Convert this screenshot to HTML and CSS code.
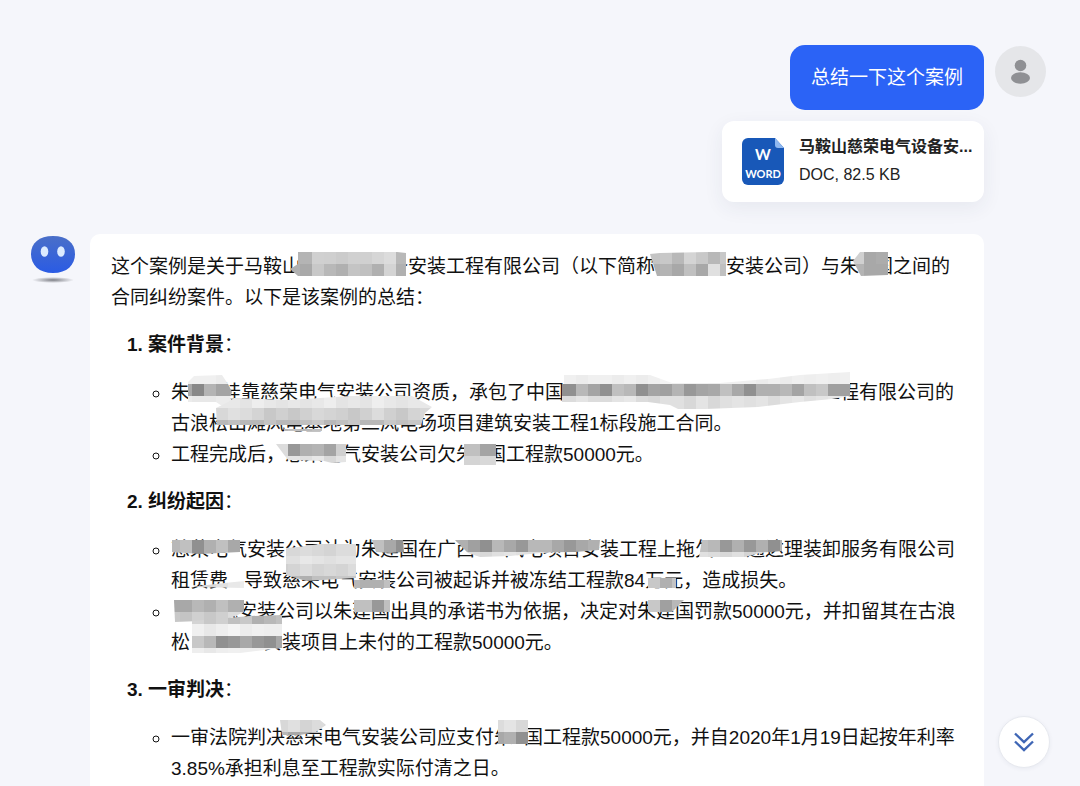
FILE: index.html
```html
<!DOCTYPE html>
<html lang="zh-CN">

<head>
    <meta charset="UTF-8" />
    <meta name="viewport" content="width=device-width, initial-scale=1.0" />
    <title>案例总结</title>
    <link rel="stylesheet" href="styles.css">
</head>

<body>

    <main class="chat">

        <section class="message message-user">
            <div class="user-content">
                <div class="bubble">总结一下这个案例</div>
                <a class="file-card" href="#">
                    <svg class="file-icon" viewBox="0 0 42 47" aria-hidden="true">
                        <path d="M6 0H33L42 10V41a6 6 0 0 1-6 6H6a6 6 0 0 1-6-6V6a6 6 0 0 1 6-6z" fill="#1858b8" />
                        <path d="M33 0L42 10H36a3 3 0 0 1-3-3z" fill="#8fb8f0" />
                        <text x="21" y="22" class="icon-letter">W</text>
                        <text x="21" y="40" class="icon-word">WORD</text>
                    </svg>
                    <div class="file-info">
                        <div class="file-name">马鞍山慈荣电气设备安...</div>
                        <div class="file-meta">DOC, 82.5 KB</div>
                    </div>
                </a>
            </div>
            <svg class="user-avatar" viewBox="0 0 51 51" aria-hidden="true">
                <circle cx="25.5" cy="25.5" r="25.5" fill="#e5e6e9" />
                <circle cx="25.5" cy="19.5" r="5.8" fill="#8f9094" />
                <ellipse cx="25.5" cy="32" rx="9.5" ry="5.7" fill="#8f9094" />
            </svg>
        </section>

        <section class="message message-bot">
            <svg class="bot-avatar" viewBox="0 0 44 48" aria-hidden="true">
                <defs>
                    <linearGradient id="face" x1="0" y1="0" x2="0" y2="1">
                        <stop offset="0" stop-color="#4a6fc8" />
                        <stop offset="1" stop-color="#2a5be4" />
                    </linearGradient>
                    <radialGradient id="shade">
                        <stop offset="0" stop-color="#7d7f86" />
                        <stop offset="1" stop-color="#7d7f86" stop-opacity="0" />
                    </radialGradient>
                </defs>
                <ellipse cx="22" cy="44" rx="21" ry="3" fill="url(#shade)" />
                <path d="M22 0C36 0 44 7 44 18S36 37 22 37 0 29 0 18 8 0 22 0z" fill="url(#face)" />
                <ellipse cx="13.5" cy="15.5" rx="3.8" ry="5.3" fill="#dcebff" />
                <ellipse cx="30" cy="15.5" rx="3.8" ry="5.3" fill="#dcebff" />
            </svg>

            <article class="answer">
                <p>这个案例是关于马鞍山<svg class="mosaic" data-mask="company"></svg>备安装工程有限公司（以下简称<svg class="mosaic" data-mask="short"></svg>安装公司）与朱<svg class="mosaic" data-mask="person"></svg>国之间的合同纠纷案件。以下是该案例的总结：</p>

                <ol>
                    <li>
                        <strong>案件背景</strong>：
                        <ul>
                            <li>朱<svg class="mosaic" data-mask="person2"></svg>挂靠慈荣电气安装公司资质，承包了中国<svg class="mosaic" data-mask="builder"></svg>工程有限公司的古浪松山滩风电<svg class="mosaic" data-mask="site"></svg>基地第二风电场项目建筑安装工程1标段施工合同。</li>
                            <li>工程完成后，<svg class="mosaic" data-mask="owner"></svg>慈荣电气安装公司欠朱<svg class="mosaic" data-mask="person3"></svg>国工程款50000元。</li>
                        </ul>
                    </li>
                    <li>
                        <strong>纠纷起因</strong>：
                        <ul>
                            <li><svg class="mosaic" data-mask="owner2"></svg>慈荣电气安装公司认为朱建国在广西<svg class="mosaic" data-mask="project"></svg>风电项目安装工程上拖欠<svg class="mosaic" data-mask="creditor"></svg>通达理装卸服务有限公司租赁费<svg class="mosaic" data-mask="fee"></svg>导致慈荣电气安装公司被起诉并被冻结工程款84万元，造成损失。</li>
                            <li><svg class="mosaic" data-mask="owner3"></svg>气安装公司以朱建国出具的承诺书为依据，决定对朱建国罚款50000元，并扣留其在古浪松<svg class="mosaic" data-mask="site2"></svg>安装项目上未付的工程款50000元。</li>
                        </ul>
                    </li>
                    <li>
                        <strong>一审判决</strong>：
                        <ul>
                            <li>一审法院判决<svg class="mosaic" data-mask="owner4"></svg>慈荣电气安装公司应支付朱<svg class="mosaic" data-mask="person4"></svg>国工程款50000元，并自2020年1月19日起按年利率3.85%承担利息至工程款实际付清之日。</li>
                        </ul>
                    </li>
                </ol>
            </article>
        </section>

    </main>

    <button class="scroll-down" type="button" aria-label="滚动到底部">
        <svg viewBox="0 0 20 20" aria-hidden="true">
            <path d="M1 1.5L10 10L19 1.5M1 9.5L10 18L19 9.5" />
        </svg>
    </button>

    <script>
        // view: left, top, width of the space kept in the line
        // parts: outline, then rows of [x, y, height, greys], each cell 12 wide
        const MASKS = {
            company: {
                view: [301, 251, 88], parts: [
                    ['290,269 298,264 298,252 397,252 406,253 406,276 298,276', [
                        [288, 252, 12, 'b4 b4 d0 cf cb d0 d0 d6 dc b8'],
                        [288, 264, 12, 'b0 a9 c8 b8 b0 c4 c0 b0 d4 b0']]]]
            },
            short: {
                view: [655, 251, 71], parts: [
                    ['650,254 660,253 708,252 726,252 726,276 657,276', [
                        [648, 252, 12, 'c4 c8 b8 d4 c8 b8 c8'],
                        [648, 264, 12, 'b0 b4 a8 c0 a8 e0 c0']]]]
            },
            person: {
                view: [859, 251, 15], parts: [
                    ['853,261 860,252 888,252 888,275 861,276', [
                        [852, 252, 12, 'd0 a8 ac'],
                        [852, 264, 12, 'b4 a8 a8']]]]
            },
            person2: {
                view: [190, 377, 32], parts: [
                    ['188,382 194,376 222,375 228,384 232,392 230,398 240,408 225,408 216,402 188,402', [
                        [180, 372, 12, 'f0 f0 f0 ec ec'],
                        [180, 384, 12, 'a8 88 b4 a4 a4'],
                        [180, 396, 12, 'ec e8 e8 ec ec']]]]
            },
            builder: {
                view: [564, 377, 257], parts: [
                    ['562,375 650,375 672,383 720,383 768,379 800,375 850,372 850,396 832,399 800,402 758,407 705,409 678,409 670,405 648,402 562,402', [
                        [564, 372, 12, 'f0 ec f0 f0 ec f0 ec f0 f4 f0 f0 f0 ee f0 f0 f0 ec f0 ec f0 ee f0 ee f0'],
                        [552, 384, 12, '90 90 b8 a4 90 c0 b8 90 a4 a0 b4 98 a4 a8 c0 a8 90 b0 b0 b8 a4 c0 c8 a0 a0'],
                        [552, 396, 14, 'dc dc e4 dc dc e4 e8 dc d8 e0 e0 d8 e4 d8 e0 e4 e0 e4 dc e4 e8 e0 e4 e8 e8']]]]
            },
            site: {
                view: [304, 408, 0], parts: [
                    ['216,408 228,402 234,398 290,400 350,396 412,396 432,407 425,413 421,425 217,425', [
                        [216, 396, 12, 'e8 e8 e4 ee e8 e4 e8 e4 e8 ee e4 e8 e4 ee e8 e4 e8 e8'],
                        [216, 408, 12, 'd8 e0 dc d4 c8 d0 c8 d0 d8 d4 d0 c8 d0 dc d0 c8 d4 d8'],
                        [216, 420, 5, 'b8 c0 b8 b8 c4 b8 b8 c0 c8 b8 c0 c8 b8 b8 c8 c0 c8 c8']]],
                    ['284,429 322,429 322,431 284,431', [[276, 428, 4, 'b8 c0 b8 c0']]]]
            },
            owner: {
                view: [285, 439, 0], parts: [
                    ['276,444 346,444 346,462 332,463 324,461 288,460', [
                        [276, 444, 12, 'dc 98 b0 b4 a4 d0'],
                        [276, 456, 8, 'e4 e4 e0 e8 d8 e4']]]]
            },
            person3: {
                view: [475, 439, 12], parts: [
                    ['464,444 496,444 496,465 464,465', [
                        [456, 444, 12, 'c0 c0 a4 a4'],
                        [456, 456, 9, 'd4 d4 d8 d8']]]]
            },
            owner2: {
                view: [171, 534, 0], parts: [
                    ['172,540 240,540 240,552 200,554 172,552', [
                        [168, 540, 14, 'b8 c0 90 b0 c0 a8']]],
                    ['286,548 298,547 320,544 356,544 356,578 306,581 286,575', [
                        [276, 540, 16, 'd8 d8 dc d8 d4 dc dc'],
                        [276, 556, 8, 'e0 e0 e8 e4 e0 e4 e4'],
                        [276, 564, 12, 'd0 d4 dc d4 d8 d4 dc'],
                        [276, 576, 6, 'b8 b8 b0 c0 c0 c8 c8']]],
                    ['372,540 403,540 404,552 390,553 376,552', [
                        [372, 540, 13, 'c0 a8 90']]]]
            },
            project: {
                view: [475, 534, 30], parts: [
                    ['455,540 600,540 599,550 575,552 540,553 510,556 480,557 468,553', [
                        [444, 540, 12, 'a8 b0 a0 90 b8 a8 98 b8 b8 a8 98 a8 b0'],
                        [444, 552, 6, 'e0 e0 dc d8 e0 e4 e0 e0 e0 e0 e0 e0 e0']]]]
            },
            creditor: {
                view: [714, 534, 32], parts: [
                    ['702,540 782,540 782,551 760,553 745,557 699,557', [
                        [696, 540, 12, 'c0 b8 98 b0 98 b0 90 b4'],
                        [696, 552, 6, 'e0 dc d8 e0 d4 dc e0 e0']]]]
            },
            fee: {
                view: [228, 565, 16], parts: [
                    ['192,587 215,584 244,581 244,588', [
                        [192, 576, 12, 'd0 d8 e0 e8 ec']]],
                    ['354,580 390,580 390,588 354,588', [
                        [348, 576, 12, 'b8 b0 b0 c0']]],
                    ['648,578 676,578 676,588 648,588', [
                        [648, 576, 12, 'c8 b0 c4']]]]
            },
            owner3: {
                view: [171, 596, 48], parts: [
                    ['174,600 244,600 244,612 240,614 225,620 175,622', [
                        [168, 600, 12, 'a8 a8 b8 b0 c0 b0 a8'],
                        [168, 612, 11, 'c8 c4 d0 c8 d0 dc e4']]],
                    ['354,600 390,600 390,612 354,612', [
                        [348, 600, 12, 'c0 c0 98 c0']]],
                    ['648,600 684,600 672,612 648,612', [
                        [648, 600, 12, 'c8 a0 b8']]]]
            },
            site2: {
                view: [190, 627, 73], parts: [
                    ['192,621 250,616 282,615 282,648 240,653 192,653', [
                        [192, 612, 12, 'd4 c8 d0 c0 c8 b0 b8 c0'],
                        [192, 624, 12, 'f0 e8 ee f4 ec f0 ee ee'],
                        [192, 636, 12, 'c8 b8 90 98 a8 98 90 a8'],
                        [192, 648, 6, 'ee e8 ee f0 ee ee f0 f0']]]]
            },
            owner4: {
                view: [285, 722, 0], parts: [
                    ['280,720 320,720 326,725 316,732 300,735 282,735', [
                        [276, 720, 12, 'd8 e0 d4 dc d8'],
                        [276, 732, 4, 'b8 a8 b0 b8 c0']]]]
            },
            person4: {
                view: [513, 722, 11], parts: [
                    ['498,720 528,720 528,744 498,744', [
                        [492, 720, 12, 'dc e4 d8'],
                        [492, 732, 12, 'a8 b0 90']]]]
            }
        };

        document.querySelectorAll('.mosaic').forEach(svg => {
            const name = svg.dataset.mask;
            const { view: [left, top, width], parts } = MASKS[name];
            // an svg of zero width is not painted, .mosaic takes this pixel back
            svg.setAttribute('width', width + 1);
            svg.innerHTML = parts.map(([outline, rows], i) => `
<clipPath id="${name}-${i}"><polygon points="${outline}"/></clipPath>
<g transform="translate(${-left} ${-top})"><g clip-path="url(#${name}-${i})" shape-rendering="crispEdges">
${rows.map(([x, y, h, greys]) => greys.split(' ').map((g, n) =>
                `<rect x="${x + n * 12}" y="${y}" width="12" height="${h}" fill="#${g}${g}${g}"/>`).join('')).join('')}
</g></g>`).join('');
        });
    </script>

</body>

</html>
```
FILE: styles.css
```css
:root {
    --page-bg: #f5f6fb;
    --card-bg: #fff;
    --accent: #2b63f6;
    --text-main: #111;
}

* {
    box-sizing: border-box
}

body {
    font-family: "Liberation Sans", "Noto Sans CJK SC", sans-serif;
    font-size: 19px;
    line-height: 31px;
    margin: 0;
    color: var(--text-main);
    background: var(--page-bg);
}

.chat {
    height: 100vh;
    overflow-y: auto;
    scrollbar-width: none;
    padding: 45px 34px 0 31px;
}

.message {
    display: flex;
    align-items: flex-start;
}

.message-user {
    justify-content: flex-end;
    gap: 11px;
    margin-bottom: 32px;
}

.user-content {
    display: flex;
    flex-direction: column;
    align-items: flex-end;
    gap: 11px;
}

.bubble {
    padding: 17px 21px;
    border-radius: 15px;
    color: #fff;
    background: var(--accent);
}

.user-avatar {
    width: 51px;
    height: 51px;
    flex: none;
    margin-top: 1px;
}

.file-card {
    display: flex;
    align-items: center;
    gap: 15px;
    width: 262px;
    height: 81px;
    padding: 0 12px 0 20px;
    border-radius: 12px;
    color: #222;
    background: var(--card-bg);
    box-shadow: 0 6px 20px rgba(40, 50, 80, .07);
    text-decoration: none;
}

.file-icon {
    width: 42px;
    height: 47px;
    flex: none;
}

.icon-letter,
.icon-word {
    font-family: Lato, sans-serif;
    font-weight: 700;
    fill: #fff;
    text-anchor: middle;
}

.icon-letter {
    font-size: 15px
}

.icon-word {
    font-size: 11px
}

.file-info {
    padding-bottom: 2px;
    font-size: 16px;
    line-height: 28px;
    white-space: nowrap;
}

.file-name {
    font-weight: 700
}

.message-bot {
    gap: 15px;
    padding-right: 62px;
}

.bot-avatar {
    width: 44px;
    height: 48px;
    flex: none;
    margin-top: 2px;
}

.answer {
    flex: 1;
    padding: 17px 21px;
    border-radius: 10px;
    background: var(--card-bg);
}

.answer p {
    margin: 0 0 16px
}

.answer ol {
    margin: 0;
    padding-left: 37px;
}

.answer ol > li::marker {
    font-weight: 700
}

.answer ul {
    list-style: circle;
    margin: 17px 0 16px;
    padding-left: 23px;
}

/* blurred-out names: keeps its width in the line, cells spill over the text */
.mosaic {
    position: relative;
    z-index: 1;
    display: inline-block;
    height: 31px;
    margin-right: -1px;
    vertical-align: top;
    overflow: visible;
}

.scroll-down {
    position: fixed;
    right: 30px;
    bottom: 18px;
    display: flex;
    align-items: center;
    justify-content: center;
    width: 52px;
    height: 52px;
    padding: 0;
    border: 1px solid #e6e8ee;
    border-radius: 50%;
    background: var(--card-bg);
    box-shadow: 0 1px 4px rgba(40, 50, 80, .06);
    cursor: pointer;
}

.scroll-down svg {
    width: 20px;
    height: 20px;
    fill: none;
    stroke: #3f66b5;
    stroke-width: 2.4px;
}
```
